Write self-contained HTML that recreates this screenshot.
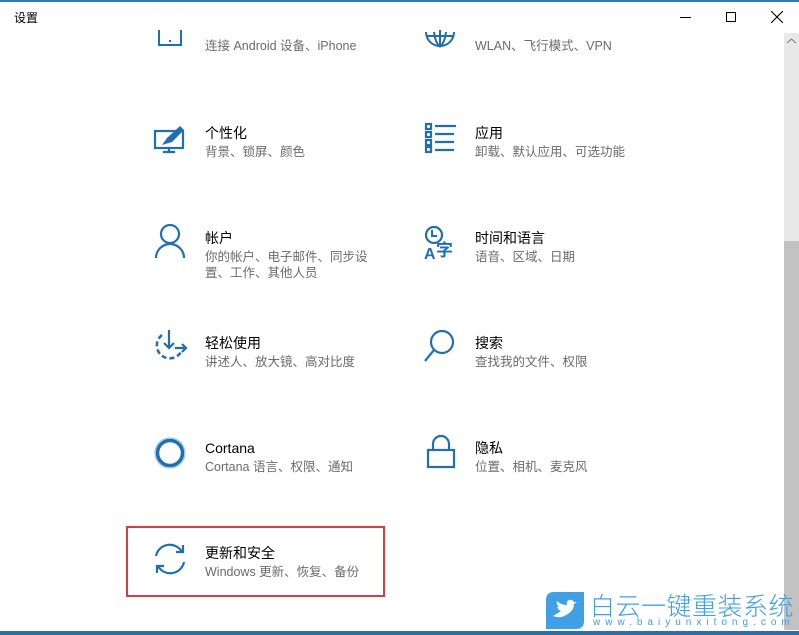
<!DOCTYPE html>
<html><head><meta charset="utf-8"><style>
*{margin:0;padding:0;box-sizing:border-box}
body{width:799px;height:635px;background:#fff;position:relative;overflow:hidden;font-family:"Liberation Sans","Noto Sans CJK SC",sans-serif}
.t{position:absolute;font-size:14px;color:#000;white-space:nowrap;line-height:16px}
.s{position:absolute;font-size:12.5px;color:#6b6b6b;white-space:nowrap;line-height:16px}
svg{position:absolute}
</style></head><body>
<div style="position:absolute;left:0;top:0;width:799px;height:2px;background:#2b79b5"></div>
<div class="t" style="left:14px;top:10px;font-size:12px">设置</div>
<div style="position:absolute;left:680px;top:17px;width:11px;height:1px;background:#000"></div>
<div style="position:absolute;left:726px;top:12px;width:10px;height:10px;border:1px solid #000"></div>
<svg style="left:771px;top:11px" width="12" height="12"><path d="M0 0L12 12M12 0L0 12" stroke="#000" stroke-width="1.1"/></svg>
<div style="position:absolute;left:784px;top:33px;width:15px;height:597px;background:#e8e8e8"></div>
<div style="position:absolute;left:784px;top:241px;width:15px;height:389px;background:#c2c2c2"></div>
<svg style="left:786px;top:37px" width="11" height="8"><path d="M1 6L5.5 2L10 6" stroke="#777" fill="none"/></svg>

<!-- row 0 -->
<svg style="left:155px;top:30px" width="30" height="20"><path d="M4 0V15H26V0" stroke="#1f6fb2" stroke-width="2" fill="none"/><rect x="14" y="10" width="2" height="2" fill="#1f6fb2"/></svg>
<div class="s" style="left:205px;top:38px">连接 Android 设备、iPhone</div>
<svg style="left:424px;top:30px" width="32" height="20"><path d="M2 2A14 14 0 0 0 30 2" stroke="#1f6fb2" stroke-width="2" fill="none"/><path d="M2 6H30M16 0V17M10 2Q11 12 16 17M22 2Q21 12 16 17" stroke="#1f6fb2" stroke-width="2" fill="none"/></svg>
<div class="s" style="left:475px;top:38px">WLAN、飞行模式、VPN</div>

<!-- row 1 -->
<svg style="left:153px;top:125px" width="34" height="30"><rect x="2" y="6" width="28" height="17" stroke="#1f6fb2" stroke-width="2.2" fill="none"/><path d="M16 23V27M10 27H22" stroke="#1f6fb2" stroke-width="2.2"/><path d="M9 20L14 13L27 1L31 5L19 17Z" fill="#1f6fb2"/></svg>
<div class="t" style="left:205px;top:125px">个性化</div>
<div class="s" style="left:205px;top:144px">背景、锁屏、颜色</div>
<svg style="left:424px;top:122px" width="34" height="32"><g fill="none" stroke="#1f6fb2" stroke-width="2.2"><rect x="2" y="2" width="5" height="5"/><rect x="2" y="10" width="5" height="5"/><rect x="2" y="18" width="5" height="5"/><rect x="2" y="25" width="5" height="5"/><path d="M11 4H32M11 12H30M11 20H30M11 28H30"/></g></svg>
<div class="t" style="left:475px;top:125px">应用</div>
<div class="s" style="left:475px;top:144px">卸载、默认应用、可选功能</div>

<!-- row 2 -->
<svg style="left:154px;top:224px" width="34" height="36"><circle cx="16" cy="10" r="9" stroke="#1f6fb2" stroke-width="2.2" fill="none"/><path d="M2 34A14 14 0 0 1 30 34" stroke="#1f6fb2" stroke-width="2.2" fill="none"/></svg>
<div class="t" style="left:205px;top:230px">帐户</div>
<div class="s" style="left:205px;top:249px">你的帐户、电子邮件、同步设</div>
<div class="s" style="left:205px;top:265px">置、工作、其他人员</div>
<svg style="left:423px;top:225px" width="36" height="36"><circle cx="11" cy="10" r="8" stroke="#1f6fb2" stroke-width="2.2" fill="none"/><path d="M9 5V11H14" stroke="#1f6fb2" stroke-width="2" fill="none"/><text x="1" y="34" font-size="16" font-weight="bold" fill="#1f6fb2" font-family="Liberation Sans">A</text><text x="13" y="31" font-size="17" font-weight="bold" fill="#1f6fb2" font-family="Noto Sans CJK SC">字</text></svg>
<div class="t" style="left:475px;top:230px">时间和语言</div>
<div class="s" style="left:475px;top:249px">语音、区域、日期</div>

<!-- row 3 -->
<svg style="left:152px;top:328px" width="36" height="36"><path d="M10 7A13 13 0 1 0 29 24" stroke="#1f6fb2" stroke-width="2.5" fill="none" stroke-dasharray="5 3"/><path d="M17 2V20M12 15L17 20L22 15M23 20H34M30 16L34 20L30 24" stroke="#1f6fb2" stroke-width="2.2" fill="none"/></svg>
<div class="t" style="left:205px;top:335px">轻松使用</div>
<div class="s" style="left:205px;top:354px">讲述人、放大镜、高对比度</div>
<svg style="left:423px;top:329px" width="36" height="36"><circle cx="19" cy="13" r="11" stroke="#1f6fb2" stroke-width="2.2" fill="none"/><path d="M11 21L2 32" stroke="#1f6fb2" stroke-width="2.2"/></svg>
<div class="t" style="left:475px;top:335px">搜索</div>
<div class="s" style="left:475px;top:354px">查找我的文件、权限</div>

<!-- row 4 -->
<svg style="left:153px;top:436px" width="34" height="34"><circle cx="17" cy="17" r="12.5" stroke="#1f6fb2" stroke-width="3.5" fill="none"/><circle cx="17" cy="17" r="15" stroke="#9cc8ec" stroke-width="1.2" fill="none"/></svg>
<div class="t" style="left:205px;top:440px">Cortana</div>
<div class="s" style="left:205px;top:459px">Cortana 语言、权限、通知</div>
<svg style="left:424px;top:434px" width="34" height="36"><path d="M9 16V10A8 8 0 0 1 25 10V16" stroke="#1f6fb2" stroke-width="2.2" fill="none"/><rect x="4" y="16" width="26" height="17" stroke="#1f6fb2" stroke-width="2.2" fill="none"/></svg>
<div class="t" style="left:475px;top:440px">隐私</div>
<div class="s" style="left:475px;top:459px">位置、相机、麦克风</div>

<!-- row 5 -->
<div style="position:absolute;left:126px;top:526px;width:259px;height:71px;border:2.5px solid #d83c3c"></div>
<svg style="left:152px;top:541px" width="36" height="36"><path d="M4 15A14 14 0 0 1 30 11" stroke="#1f6fb2" stroke-width="2.2" fill="none"/><path d="M24 11H31V4" stroke="#1f6fb2" stroke-width="2.2" fill="none"/><path d="M32 21A14 14 0 0 1 6 25" stroke="#1f6fb2" stroke-width="2.2" fill="none"/><path d="M12 25H5V32" stroke="#1f6fb2" stroke-width="2.2" fill="none"/></svg>
<div class="t" style="left:205px;top:545px">更新和安全</div>
<div class="s" style="left:205px;top:564px">Windows 更新、恢复、备份</div>

<!-- watermark -->
<svg style="left:546px;top:592px" width="38" height="37"><path d="M8 0H38V29Q38 37 30 37H0V8Q0 0 8 0Z" fill="#3fa0e6"/><path d="M7 24Q14 27 20 23Q28 19 28 12L31 10L28 10Q26 7 23 8Q20 9 21 13Q15 13 11 9Q10 13 13 15L11 15Q12 18 15 19Q12 21 7 24Z" fill="#fff"/></svg>
<div style="position:absolute;left:590px;top:590px;font-size:25px;color:#3fa0e6;font-family:'Noto Sans CJK SC',sans-serif;font-weight:300;letter-spacing:0.5px;line-height:30px;white-space:nowrap">白云一键重装系统</div>
<div style="position:absolute;left:593px;top:617px;font-size:10px;color:#3fa0e6;letter-spacing:5px;line-height:12px;white-space:nowrap">www.baiyunxitong.com</div>
<div style="position:absolute;left:0;top:631px;width:799px;height:4px;background:#2a6fa8"></div>
</body></html>
